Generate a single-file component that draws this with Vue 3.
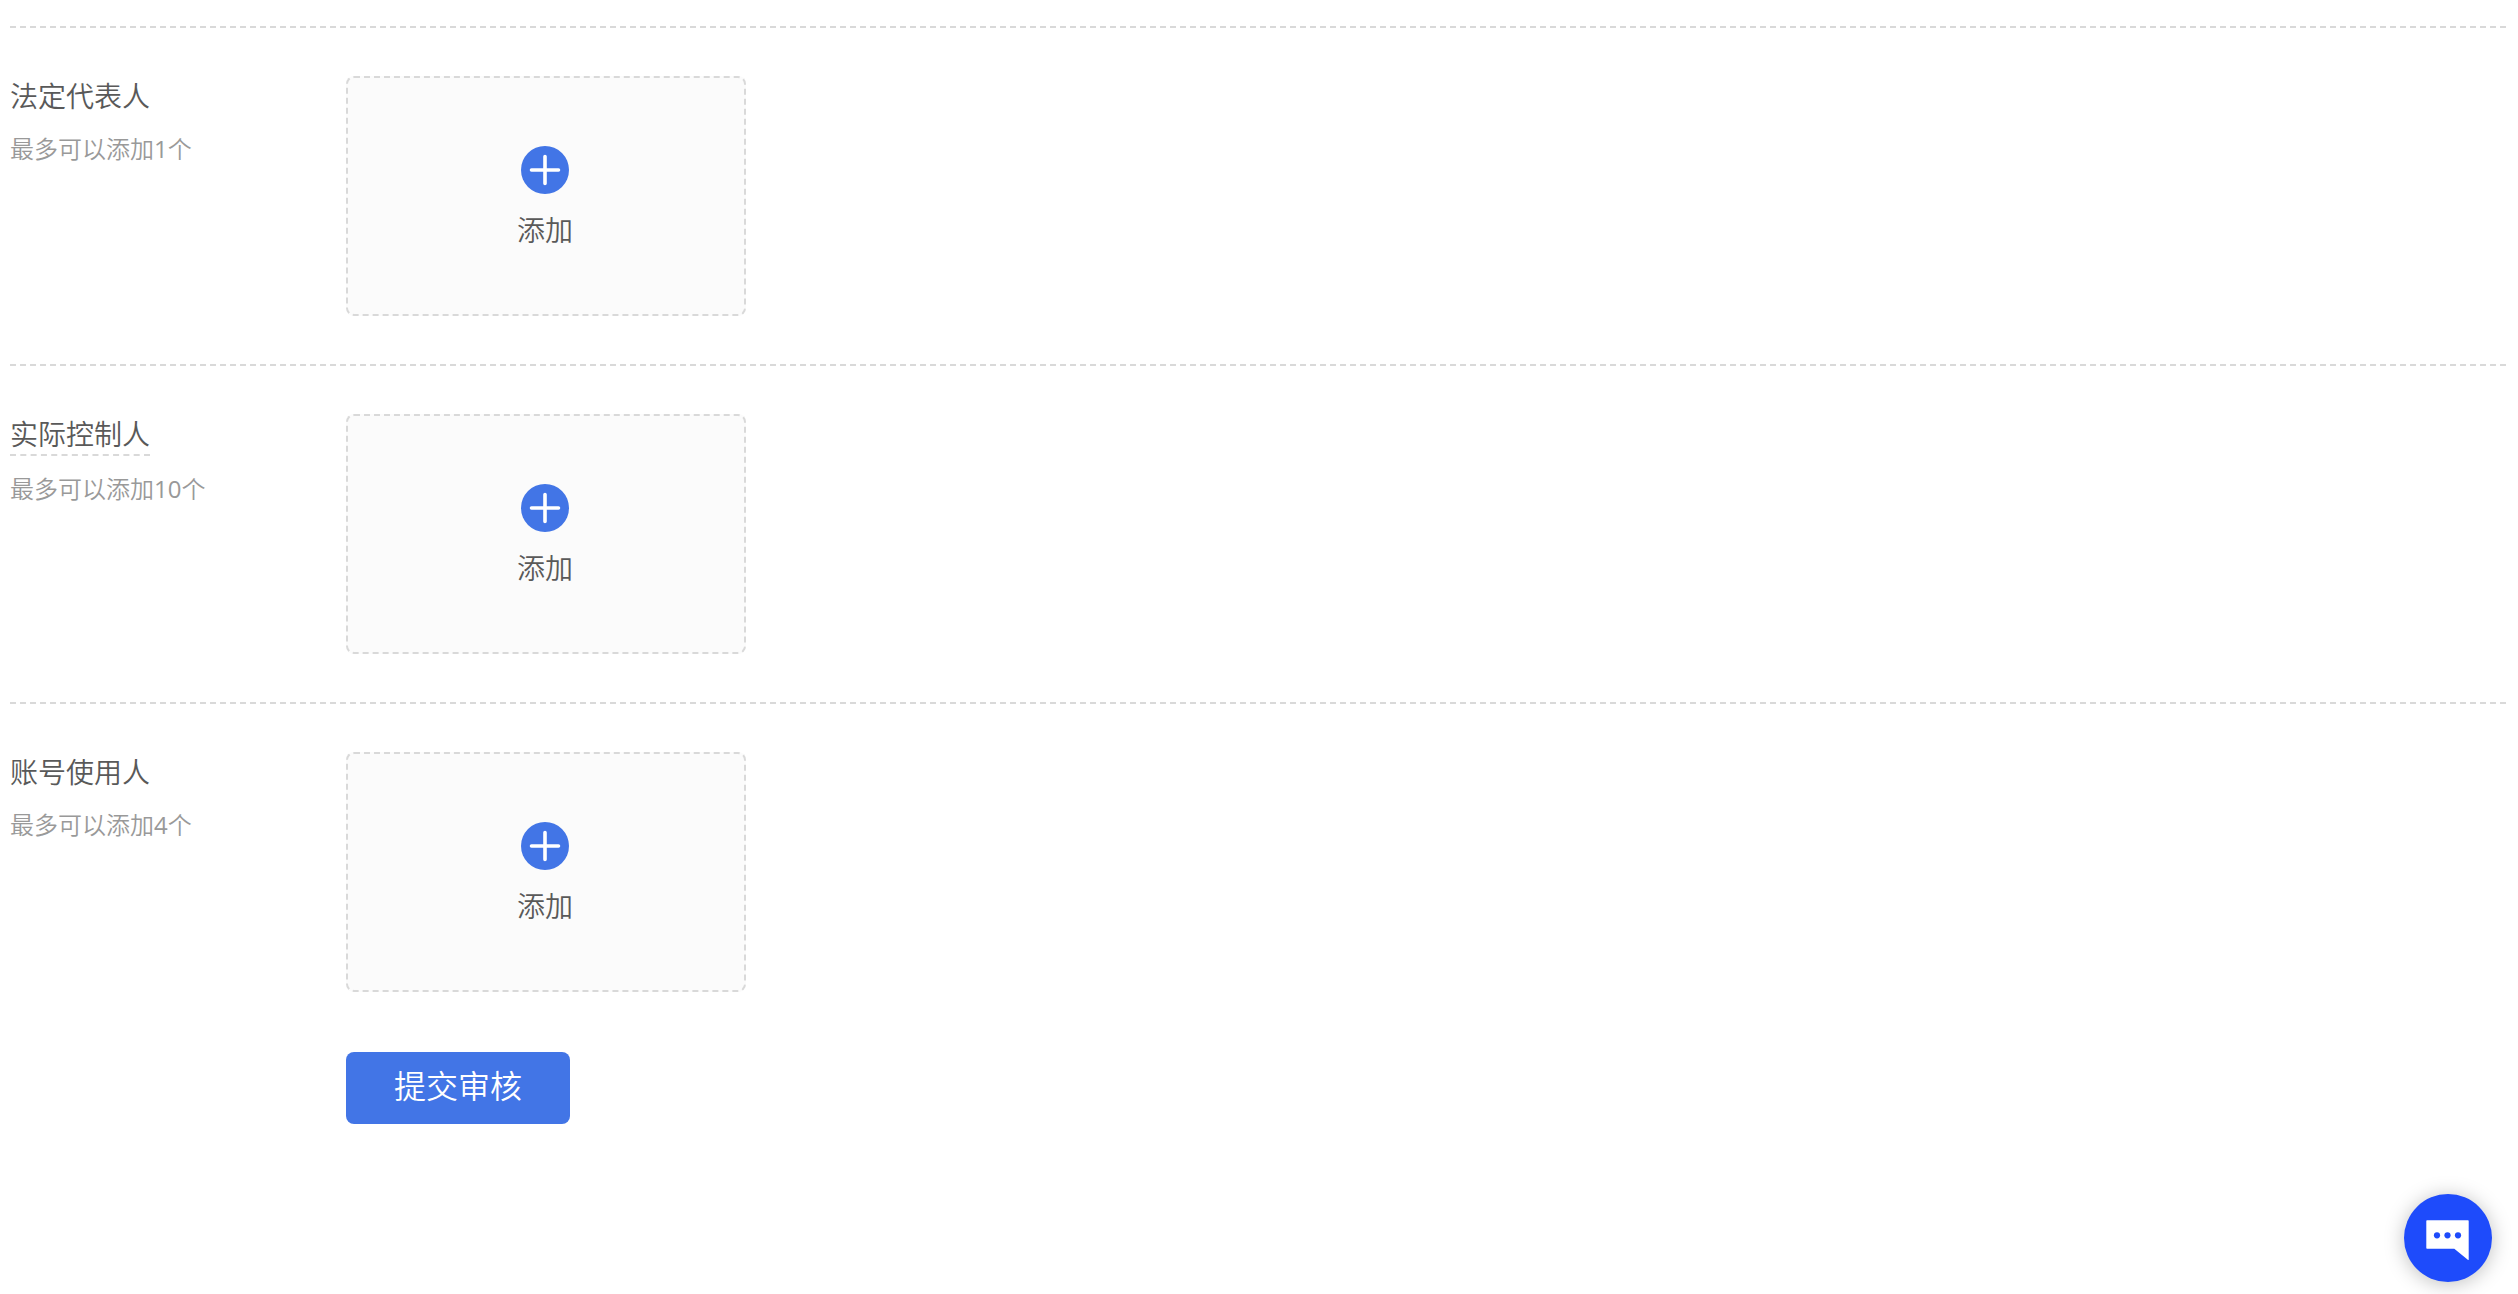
<template>
  <main class="page">
    <section v-for="item in sections" :key="item.title" class="section">
      <div class="info">
        <h2 class="title" :class="{ tip: item.tip }">{{ item.title }}</h2>
        <p class="limit">最多可以添加<span class="num">{{ item.max }}</span>个</p>
      </div>
      <button type="button" class="add">
        <svg class="plus" viewBox="0 0 48 48" aria-hidden="true">
          <circle cx="24" cy="24" r="24" fill="#4275e6" />
          <path d="M24 10.5v27M10.5 24h27" stroke="#fff" stroke-width="3.6" stroke-linecap="round" />
        </svg>
        <span>添加</span>
      </button>
    </section>
    <div class="footer">
      <button type="button" class="submit">提交审核</button>
    </div>
    <button type="button" class="chat" aria-label="chat">
      <svg viewBox="0 0 88 88" aria-hidden="true">
        <path d="M23 26.3h41a.7.7 0 0 1 .7.7v38.4a.5.5 0 0 1-.9.4L50.3 54.7H23a.7.7 0 0 1-.7-.7V27a.7.7 0 0 1 .7-.7z" fill="#fff" />
        <circle cx="33" cy="41.3" r="3.1" />
        <circle cx="43.5" cy="41.3" r="3.1" />
        <circle cx="54" cy="41.3" r="3.1" />
      </svg>
    </button>
  </main>
</template>

<script setup>
import { ref } from 'vue';

const sections = ref([
  { title: '法定代表人', max: 1, tip: false },
  { title: '实际控制人', max: 10, tip: true },
  { title: '账号使用人', max: 4, tip: false }
]);
</script>

<style>
body {
  margin: 0;
  background: #fff;
}
</style>

<style scoped>
.page {
  padding: 26px 12px 0 10px;
  font-family: "Open Sans", "Noto Sans CJK SC", sans-serif;
  font-weight: 350;
  color: #595959;
}
button {
  border: 0;
  padding: 0;
  font-family: inherit;
  font-weight: inherit;
  cursor: pointer;
}
.section {
  display: flex;
  align-items: flex-start;
  padding: 48px 0;
  border-top: 2px dashed #d9d9d9;
}
.info {
  width: 336px;
}
.title {
  width: fit-content;
  margin: 0;
  font-size: 28px;
  font-weight: inherit;
  line-height: 40px;
}
.tip {
  border-bottom: 2px dashed #d9d9d9;
}
.limit {
  margin: 16px 0 0;
  font-size: 24px;
  line-height: 34px;
  color: #999;
}
.num {
  font-weight: 400;
}
.add {
  display: flex;
  flex-direction: column;
  align-items: center;
  gap: 18px;
  box-sizing: border-box;
  width: 400px;
  height: 240px;
  padding: 68px 2px 0 0;
  border: 2px dashed #d9d9d9;
  border-radius: 8px;
  background: #fbfbfb;
  color: #595959;
  font-size: 28px;
  line-height: 36px;
}
.plus {
  width: 48px;
  height: 48px;
}
.footer {
  padding: 12px 0 0 336px;
}
.submit {
  display: block;
  width: 224px;
  height: 72px;
  padding-bottom: 4px;
  border-radius: 8px;
  background: #4275e6;
  color: #fff;
  font-size: 32px;
  line-height: 36px;
}
.chat {
  position: fixed;
  right: 26px;
  bottom: 12px;
  width: 88px;
  height: 88px;
  border-radius: 50%;
  background: #1e4bfb;
  box-shadow: 0 2px 20px rgba(0, 0, 0, 0.25);
}
.chat svg {
  display: block;
  fill: #1e4bfb;
}
</style>
